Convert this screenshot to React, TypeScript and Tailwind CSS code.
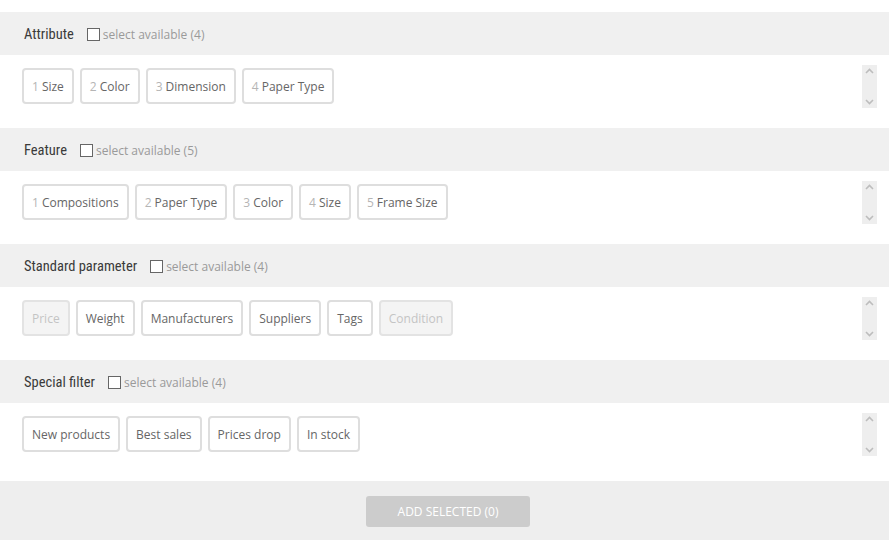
import React from 'react';

type Chip = { label: string; num?: number; disabled?: boolean };

interface Group {
  title: string;
  available: number;
  chips: Chip[];
  last?: boolean;
}

const groups: Group[] = [
  {
    title: 'Attribute',
    available: 4,
    chips: [
      { num: 1, label: 'Size' },
      { num: 2, label: 'Color' },
      { num: 3, label: 'Dimension' },
      { num: 4, label: 'Paper Type' },
    ],
  },
  {
    title: 'Feature',
    available: 5,
    chips: [
      { num: 1, label: 'Compositions' },
      { num: 2, label: 'Paper Type' },
      { num: 3, label: 'Color' },
      { num: 4, label: 'Size' },
      { num: 5, label: 'Frame Size' },
    ],
  },
  {
    title: 'Standard parameter',
    available: 4,
    chips: [
      { label: 'Price', disabled: true },
      { label: 'Weight' },
      { label: 'Manufacturers' },
      { label: 'Suppliers' },
      { label: 'Tags' },
      { label: 'Condition', disabled: true },
    ],
  },
  {
    title: 'Special filter',
    available: 4,
    last: true,
    chips: [
      { label: 'New products' },
      { label: 'Best sales' },
      { label: 'Prices drop' },
      { label: 'In stock' },
    ],
  },
];

// fake scrollbar on the right of each list
const ScrollBar = () => (
  <div className="flex h-[43px] w-[15px] flex-col items-center justify-between bg-[#eeeeee] py-[3px]">
    <svg width="9" height="6" viewBox="0 0 9 6" fill="none">
      <path d="M1 5 L4.5 1.5 L8 5" stroke="#bdbdbd" strokeWidth="1.6" />
    </svg>
    <svg width="9" height="6" viewBox="0 0 9 6" fill="none">
      <path d="M1 1 L4.5 4.5 L8 1" stroke="#bdbdbd" strokeWidth="1.6" />
    </svg>
  </div>
);

const ChipButton = ({ chip }: { chip: Chip }) => (
  <span
    className={`flex h-[36px] items-center rounded-[4px] border-2 px-[8px] pt-[1px] text-[12px] ${
      chip.disabled
        ? 'border-[#e3e3e3] bg-[#f4f4f4] text-[#c4c4c4]'
        : 'border-[#dedede] bg-white text-[#666666]'
    }`}
  >
    {chip.num !== undefined && <span className="mr-[3px] text-[#b5b5b5]">{chip.num}</span>}
    {chip.label}
  </span>
);

const GroupBlock = ({ group }: { group: Group }) => (
  <div>
    <div className="flex h-[43px] items-center bg-[#f0f0f0] pl-[24px] pt-[2px]">
      <span className="font-['Roboto',sans-serif] font-stretch-condensed text-[14.5px] text-[#3a3a3a]">
        {group.title}
      </span>
      <span className="ml-[13px] h-[13px] w-[13px] border border-[#666666] bg-white" />
      <span className="ml-[3px] text-[12px] text-[#9a9a9a]">select available ({group.available})</span>
    </div>
    <div className={`flex items-start justify-between bg-white pl-[22px] pr-[12px] pt-[10px] ${group.last ? 'h-[78px]' : 'h-[73px]'}`}>
      <div className="mt-[3px] flex gap-[6px]">
        {group.chips.map((c) => (
          <ChipButton key={c.label + (c.num ?? '')} chip={c} />
        ))}
      </div>
      <ScrollBar />
    </div>
  </div>
);

export default function App() {
  return (
    <div className="h-[540px] w-[889px] bg-white pt-[12px] font-['Open_Sans',sans-serif]">
      {groups.map((g) => (
        <GroupBlock key={g.title} group={g} />
      ))}
      <div className="flex h-[59px] justify-center bg-[#eeeeee] pl-[7px] pt-[15px]">
        <button className="h-[31px] w-[164px] rounded-[3px] bg-[#cccccc] text-[12px] uppercase text-white">
          Add selected (0)
        </button>
      </div>
    </div>
  );
}
